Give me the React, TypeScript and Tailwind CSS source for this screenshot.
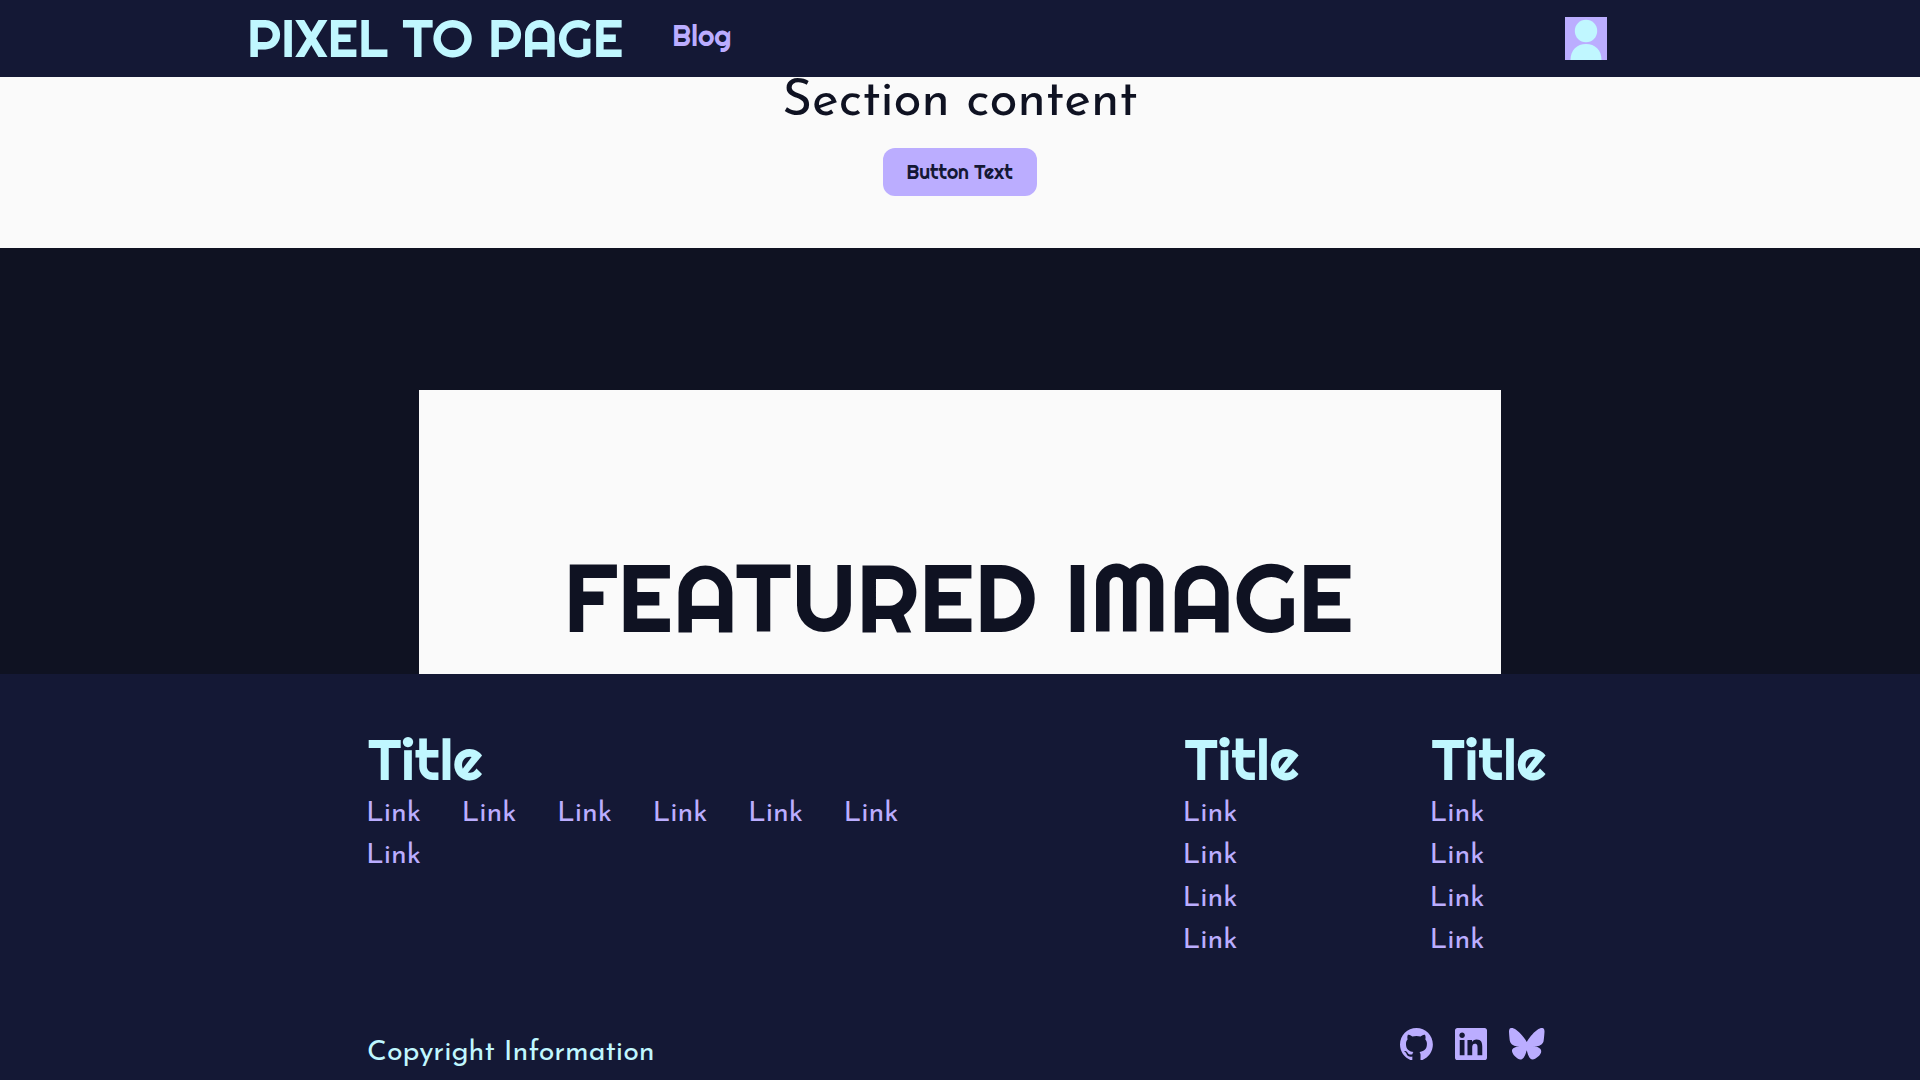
import { SiBluesky, SiLinkedin } from "react-icons/si";

const display = "font-['Righteous','Lato',sans-serif]";
const links = (n: number) => Array.from({ length: n }, (_, i) => i);

function GithubMark() {
  return (
    <svg viewBox="0 0 98 96" fill="currentColor" className="h-[32.4px] w-[33px]">
      <path
        fillRule="evenodd"
        clipRule="evenodd"
        d="M48.854 0C21.839 0 0 22 0 49.217c0 21.756 13.993 40.172 33.405 46.69 2.427.49 3.316-1.059 3.316-2.362 0-1.141-.08-5.052-.08-9.127-13.59 2.934-16.42-5.867-16.42-5.867-2.184-5.704-5.42-7.17-5.42-7.17-4.448-3.015.324-3.015.324-3.015 4.934.326 7.523 5.052 7.523 5.052 4.367 7.496 11.404 5.378 14.235 4.074.404-3.178 1.699-5.378 3.074-6.6-10.839-1.141-22.243-5.378-22.243-24.283 0-5.378 1.94-9.778 5.014-13.2-.485-1.222-2.184-6.275.486-13.038 0 0 4.125-1.304 13.426 5.052a46.97 46.97 0 0 1 12.214-1.63c4.125 0 8.33.571 12.213 1.63 9.302-6.356 13.427-5.052 13.427-5.052 2.67 6.763.97 11.816.485 13.038 3.155 3.422 5.015 7.822 5.015 13.2 0 18.905-11.404 23.06-22.324 24.283 1.78 1.548 3.316 4.481 3.316 9.126 0 6.6-.08 11.897-.08 13.526 0 1.304.89 2.853 3.316 2.364 19.412-6.52 33.405-24.935 33.405-46.691C97.707 22 75.788 0 48.854 0z"
      />
    </svg>
  );
}

function FooterTitle() {
  return (
    <h2 className={`${display} pl-[2.3px] text-[57px] leading-[60px] text-[#c0f7ff]`}>Title</h2>
  );
}

function FooterLink() {
  return (
    <a href="#" className="block w-[55.5px] text-[28.6px] leading-[42.4px] text-[#bbadff]">
      Link
    </a>
  );
}

function LinkColumn() {
  return (
    <div className="w-[115px]">
      <FooterTitle />
      <nav className="mt-[2.7px]">
        {links(4).map((i) => (
          <FooterLink key={i} />
        ))}
      </nav>
    </div>
  );
}

export default function App() {
  return (
    <div className="flex h-[1080px] w-full flex-col overflow-hidden bg-[#0f1222] font-['Josefin_Sans','Lato',sans-serif]">
      <header className="flex h-[77px] shrink-0 items-start bg-[#141835] pl-[247px] pr-[313px]">
        <h1 className={`${display} text-[52.9px] leading-[77px] whitespace-nowrap text-[#c0f7ff]`}>
          PIXEL TO PAGE
        </h1>
        <a href="#" className={`${display} ml-[49px] text-[28.4px] leading-[72px] text-[#bbadff]`}>
          Blog
        </a>
        <svg viewBox="0 0 42 43" className="mt-[17px] ml-auto h-[43px] w-[42px] bg-[#bbadff]">
          <circle cx="21" cy="14" r="11.2" fill="#c0f7ff" />
          <path d="M5.5 43C5.5 33 12 27 21 27S36.5 33 36.5 43Z" fill="#c0f7ff" />
        </svg>
      </header>

      <section className="flex h-[171px] shrink-0 flex-col items-center bg-[#fafafa]">
        <p className="text-[51.3px] leading-[51px] text-[#0f1222]">Section content</p>
        <button
          className={`${display} mt-[20px] h-12 w-[154px] rounded-xl bg-[#bbadff] pr-px text-[19.3px] leading-[48px] text-[#141835]`}
        >
          Button Text
        </button>
      </section>

      <section className="flex h-[426px] shrink-0 justify-center pt-[142px]">
        <div className="flex h-[284px] w-[1082px] justify-center overflow-hidden bg-[#fafafa] pt-[159px] pr-[3px]">
          <h2 className={`${display} text-[96.2px] leading-[97px] whitespace-nowrap text-[#0f1222]`}>
            FEATURED IMAGE
          </h2>
        </div>
      </section>

      <footer className="flex h-[406px] shrink-0 flex-col bg-[#141835] pt-[56px] pr-[375.5px] pl-[366px]">
        <div className="flex h-[298px] shrink-0">
          <div className="w-[560px]">
            <FooterTitle />
            <nav className="mt-[2.7px] flex flex-wrap gap-x-[40px]">
              {links(7).map((i) => (
                <FooterLink key={i} />
              ))}
            </nav>
          </div>
          <div className="ml-auto flex gap-[132px]">
            <LinkColumn />
            <LinkColumn />
          </div>
        </div>
        <div className="flex h-[42px] items-start justify-between pl-px">
          <p className="pt-[4px] text-[28.7px] leading-[42px] text-[#c0f7ff]">Copyright Information</p>
          <div className="flex h-8 items-center gap-[22px] text-[#bbadff]">
            <GithubMark />
            <SiLinkedin size={32} />
            <SiBluesky size={35.5} />
          </div>
        </div>
      </footer>
    </div>
  );
}
